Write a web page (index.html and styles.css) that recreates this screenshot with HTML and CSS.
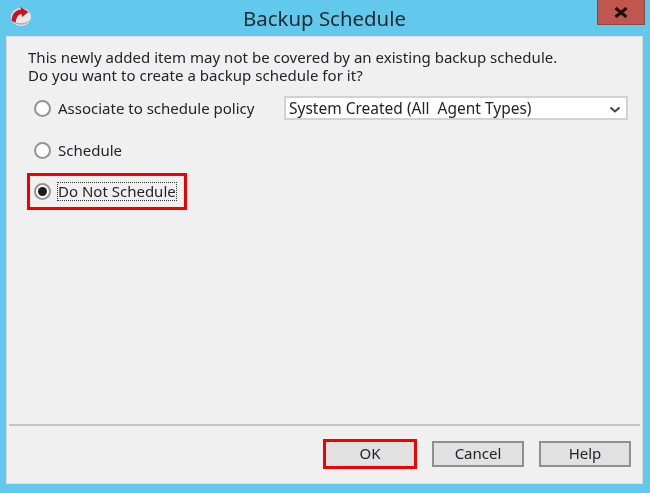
FILE: index.html
```html
<!DOCTYPE html>
<html lang="en">
<head>
    <meta charset="UTF-8">
    <meta name="viewport" content="width=device-width, initial-scale=1.0">
    <title>Backup Schedule</title>
    <link rel="stylesheet" href="styles.css">
</head>
<body>
    <div class="window">
        <div class="titlebar">
            <svg class="app-icon" width="22" height="22" viewBox="0 0 22 22">
                <ellipse cx="11" cy="11" rx="10" ry="9" fill="#e9e6e6"/>
                <path d="M1.500 12.500a10 9 0 0 0 19 0a10 7 0 0 1-19 0z" fill="#a9a5a5"/>
                <path d="M2 15C1 8.500 5.500 3.800 11 3.500L10.500 1l8 5-6.500 5-.5-3C8.500 8.400 6.500 10.500 5.500 16.500z" fill="#c8141e"/>
            </svg>
            <span class="title">Backup Schedule</span>
            <div class="close">
                <svg width="14" height="11" viewBox="0 0 14 11">
                    <path d="M1.500 1l11 9M12.500 1l-11 9" stroke="#1c1010" stroke-width="3" fill="none"/>
                </svg>
            </div>
        </div>
        <div class="panel">
            <div class="content">
                <p class="message">This newly added item may not be covered by an existing backup schedule.<br>Do you want to create a backup schedule for it?</p>
                <div class="policy-row">
                    <label class="option">
                        <span class="radio"></span>
                        <span>Associate to schedule policy</span>
                    </label>
                    <div class="dropdown">
                        <span class="dropdown-text">System Created (All&nbsp; Agent Types)</span>
                        <svg class="chevron" width="12" height="8" viewBox="0 0 12 8">
                            <path d="M1.500 1.500l4.500 4 4.500-4" stroke="#444" stroke-width="2" fill="none"/>
                        </svg>
                    </div>
                </div>
                <label class="option schedule-option">
                    <span class="radio"></span>
                    <span>Schedule</span>
                </label>
                <label class="option selected-option">
                    <span class="radio checked"></span>
                    <span class="focus-text">Do Not Schedule</span>
                </label>
            </div>
            <div class="separator"></div>
            <div class="footer">
                <button class="btn btn-ok">OK</button>
                <button class="btn">Cancel</button>
                <button class="btn">Help</button>
            </div>
        </div>
    </div>
</body>
</html>
```

FILE: styles.css
```css
html, body {
    margin: 0;
    height: 100%;
}
body {
    font-family: "Noto Sans", "Open Sans", sans-serif;
    font-size: 15px;
    color: #22222a;
    background-color: #63c9ec;
    overflow: hidden;
}
.window {
    position: relative;
    display: flex;
    flex-direction: column;
    width: 650px;
    height: 493px;
    box-sizing: border-box;
    padding: 0 7px 9px 6px;
    filter: blur(0.5px);
}
.titlebar {
    display: flex;
    justify-content: center;
    align-items: center;
    height: 36px;
    flex-shrink: 0;
}
.app-icon {
    position: absolute;
    left: 10px;
    top: 6px;
}
.title {
    font-size: 20.4px;
    color: #1e2a33;
}
.close {
    position: absolute;
    top: 0;
    left: 597px;
    width: 48px;
    height: 25px;
    box-sizing: border-box;
    border: 1px solid #8a4a44;
    border-top: none;
    background-color: #c0574f;
    display: flex;
    justify-content: center;
    align-items: center;
}
.panel {
    flex: 1;
    display: flex;
    flex-direction: column;
    background-color: #f0f0f0;
    border: 1px solid #dcdcdc;
}
.content {
    flex: 1;
    padding: 12px 14px 0 21px;
}
.message {
    margin: 0;
    line-height: 17.5px;
    letter-spacing: 0.03px;
}
.policy-row {
    display: flex;
    align-items: center;
    justify-content: space-between;
    margin-top: 12px;
}
.option {
    display: flex;
    align-items: center;
    gap: 7px;
    padding-left: 6px;
}
.radio {
    width: 17px;
    height: 17px;
    box-sizing: border-box;
    border: 2px solid #949494;
    border-radius: 50%;
    background-color: #fff;
    display: flex;
    justify-content: center;
    align-items: center;
}
.radio.checked::after {
    content: "";
    width: 9px;
    height: 9px;
    border-radius: 50%;
    background-color: #1c1c1c;
}
.dropdown {
    width: 344px;
    height: 24px;
    box-sizing: border-box;
    border: 2px solid #d2d2d2;
    background-color: #fff;
    display: flex;
    align-items: center;
    justify-content: space-between;
    padding: 0 5px 0 3px;
}
.dropdown-text {
    font-size: 15.5px;
}
.chevron {
    margin-top: 4px;
}
.schedule-option {
    margin-top: 20px;
}
.selected-option {
    width: 160px;
    height: 37px;
    box-sizing: border-box;
    margin-top: 13px;
    margin-left: -1px;
    padding-left: 4px;
    border: 3px solid #f00000;
}
.focus-text {
    outline: 1px dotted #333;
    line-height: 17px;
}
.separator {
    height: 2px;
    margin: 0 2px;
    background-color: #c6c6c6;
}
.footer {
    display: flex;
    justify-content: flex-end;
    align-items: center;
    gap: 15px;
    height: 55px;
    padding: 0 11px 2px 0;
}
.btn {
    width: 92px;
    height: 26px;
    box-sizing: border-box;
    border: 2px solid #8f8f8f;
    background-color: #e1e1e1;
    font: inherit;
    color: #22222a;
    padding: 0 0 2px;
}
.btn-ok {
    width: 94px;
    height: 30px;
    border: 3px solid #f00000;
}
```
